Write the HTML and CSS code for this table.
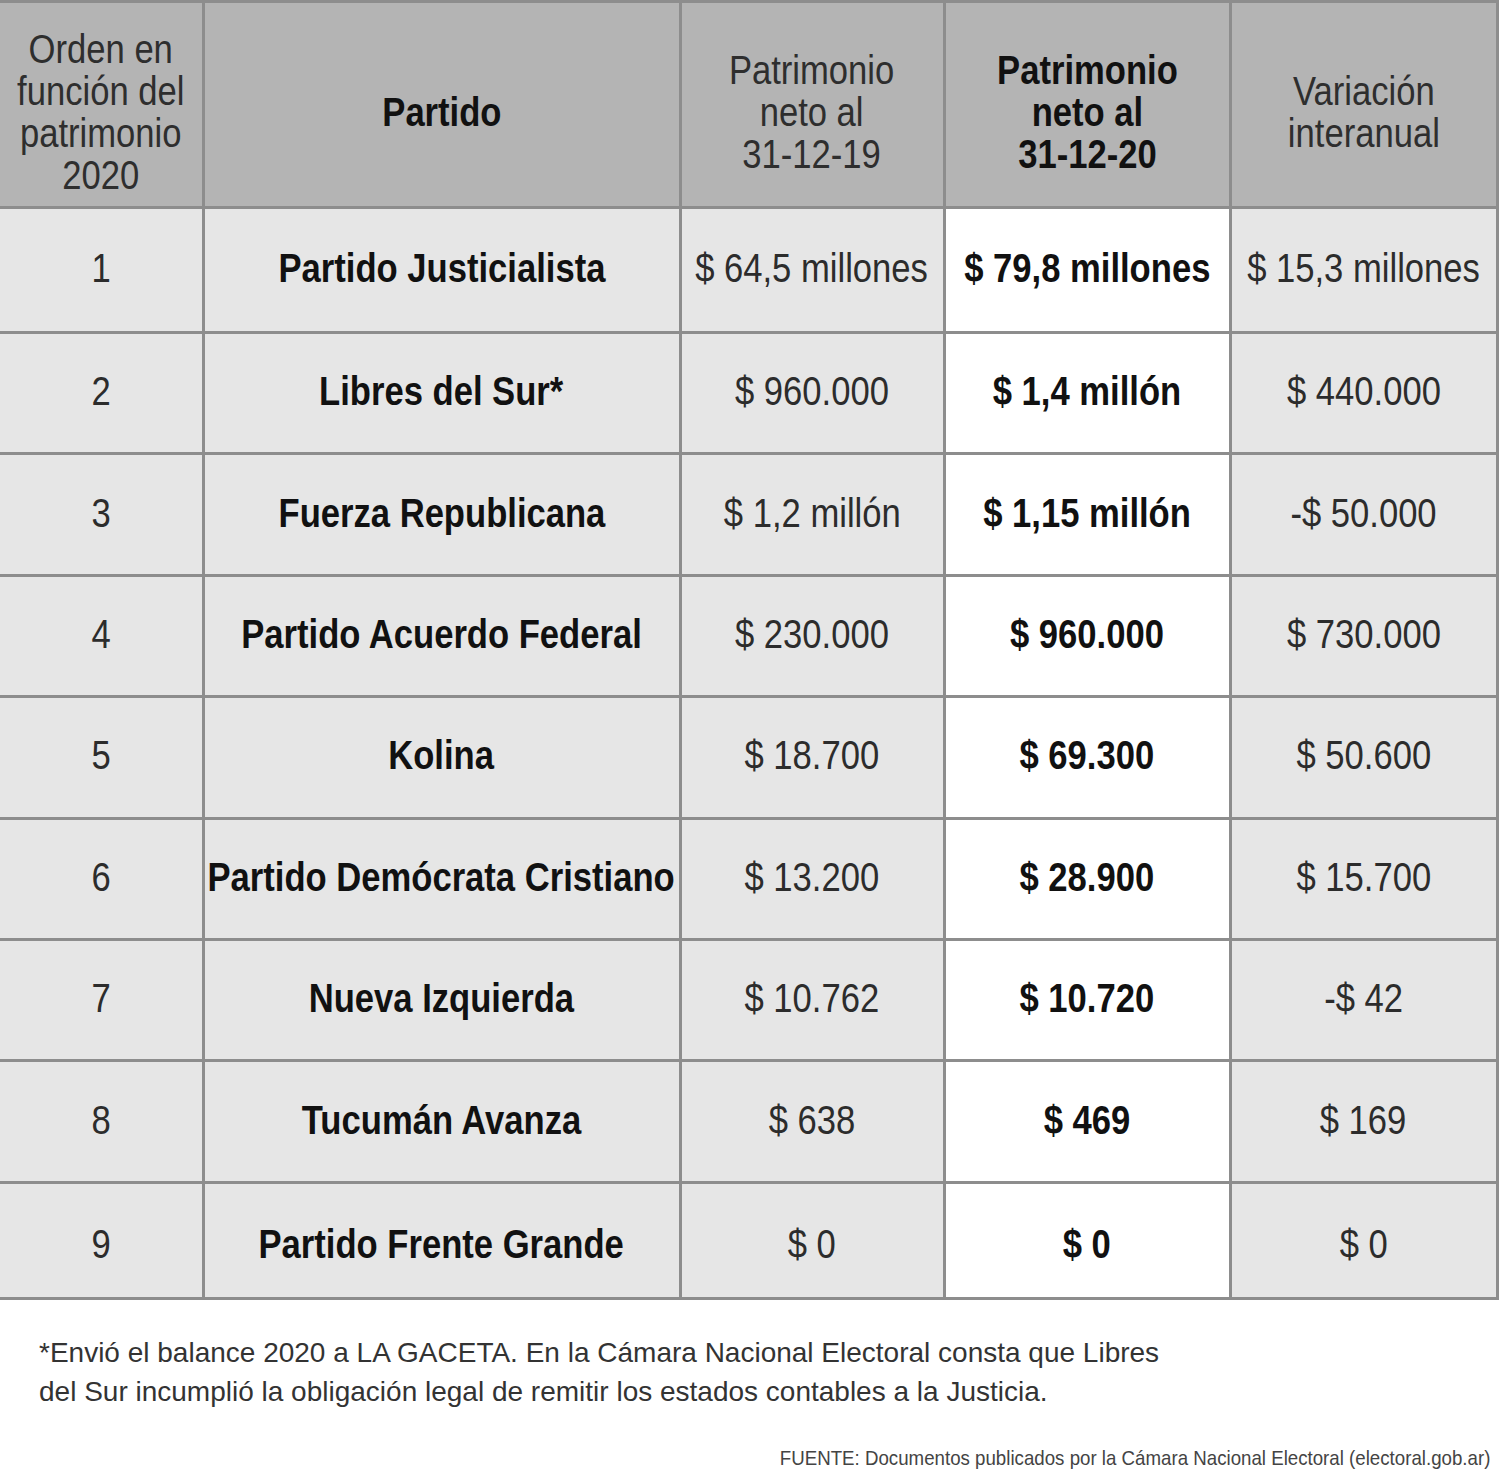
FILE: index.html
```html
<!DOCTYPE html>
<html lang="es">
<head>
<meta charset="utf-8">
<title>Patrimonio de partidos</title>
<link rel="stylesheet" href="styles.css">
</head>
<body>
<div class="page">
  <table class="tbl">
    <colgroup>
      <col class="c1"><col class="c2"><col class="c3"><col class="c4"><col class="c5">
    </colgroup>
    <thead>
      <tr>
        <th class="reg"><div class="cc"><span class="sq">Orden en<br>función del<br>patrimonio<br>2020</span></div></th>
        <th class="bold"><div class="cc"><span class="sq">Partido</span></div></th>
        <th class="reg"><div class="cc"><span class="sq">Patrimonio<br>neto al<br>31-12-19</span></div></th>
        <th class="bold"><div class="cc"><span class="sq">Patrimonio<br>neto al<br>31-12-20</span></div></th>
        <th class="reg"><div class="cc"><span class="sq">Variación<br>interanual</span></div></th>
      </tr>
    </thead>
    <tbody>
      <tr class="r1"><td class="reg"><div class="cc"><span class="sq">1</span></div></td><td class="bold"><div class="cc"><span class="sq">Partido Justicialista</span></div></td><td class="reg"><div class="cc"><span class="sq">$ 64,5 millones</span></div></td><td class="bold hl"><div class="cc"><span class="sq">$ 79,8 millones</span></div></td><td class="reg"><div class="cc"><span class="sq">$ 15,3 millones</span></div></td></tr>
      <tr><td class="reg"><div class="cc"><span class="sq">2</span></div></td><td class="bold"><div class="cc"><span class="sq">Libres del Sur*</span></div></td><td class="reg"><div class="cc"><span class="sq">$ 960.000</span></div></td><td class="bold hl"><div class="cc"><span class="sq">$ 1,4 millón</span></div></td><td class="reg"><div class="cc"><span class="sq">$ 440.000</span></div></td></tr>
      <tr><td class="reg"><div class="cc"><span class="sq">3</span></div></td><td class="bold"><div class="cc"><span class="sq">Fuerza Republicana</span></div></td><td class="reg"><div class="cc"><span class="sq">$ 1,2 millón</span></div></td><td class="bold hl"><div class="cc"><span class="sq">$ 1,15 millón</span></div></td><td class="reg"><div class="cc"><span class="sq">-$ 50.000</span></div></td></tr>
      <tr><td class="reg"><div class="cc"><span class="sq">4</span></div></td><td class="bold"><div class="cc"><span class="sq">Partido Acuerdo Federal</span></div></td><td class="reg"><div class="cc"><span class="sq">$ 230.000</span></div></td><td class="bold hl"><div class="cc"><span class="sq">$ 960.000</span></div></td><td class="reg"><div class="cc"><span class="sq">$ 730.000</span></div></td></tr>
      <tr><td class="reg"><div class="cc"><span class="sq">5</span></div></td><td class="bold"><div class="cc"><span class="sq">Kolina</span></div></td><td class="reg"><div class="cc"><span class="sq">$ 18.700</span></div></td><td class="bold hl"><div class="cc"><span class="sq">$ 69.300</span></div></td><td class="reg"><div class="cc"><span class="sq">$ 50.600</span></div></td></tr>
      <tr><td class="reg"><div class="cc"><span class="sq">6</span></div></td><td class="bold"><div class="cc"><span class="sq">Partido Demócrata Cristiano</span></div></td><td class="reg"><div class="cc"><span class="sq">$ 13.200</span></div></td><td class="bold hl"><div class="cc"><span class="sq">$ 28.900</span></div></td><td class="reg"><div class="cc"><span class="sq">$ 15.700</span></div></td></tr>
      <tr><td class="reg"><div class="cc"><span class="sq">7</span></div></td><td class="bold"><div class="cc"><span class="sq">Nueva Izquierda</span></div></td><td class="reg"><div class="cc"><span class="sq">$ 10.762</span></div></td><td class="bold hl"><div class="cc"><span class="sq">$ 10.720</span></div></td><td class="reg"><div class="cc"><span class="sq">-$ 42</span></div></td></tr>
      <tr><td class="reg"><div class="cc"><span class="sq">8</span></div></td><td class="bold"><div class="cc"><span class="sq">Tucumán Avanza</span></div></td><td class="reg"><div class="cc"><span class="sq">$ 638</span></div></td><td class="bold hl"><div class="cc"><span class="sq">$ 469</span></div></td><td class="reg"><div class="cc"><span class="sq">$ 169</span></div></td></tr>
      <tr class="r9"><td class="reg"><div class="cc"><span class="sq">9</span></div></td><td class="bold"><div class="cc"><span class="sq">Partido Frente Grande</span></div></td><td class="reg"><div class="cc"><span class="sq">$ 0</span></div></td><td class="bold hl"><div class="cc"><span class="sq">$ 0</span></div></td><td class="reg"><div class="cc"><span class="sq">$ 0</span></div></td></tr>
    </tbody>
  </table>
  <p class="note"><span class="note-text">*Envió el balance 2020 a LA GACETA. En la Cámara Nacional Electoral consta que Libres<br>del Sur incumplió la obligación legal de remitir los estados contables a la Justicia.</span></p>
  <p class="source"><span class="source-text">FUENTE: Documentos publicados por la Cámara Nacional Electoral (electoral.gob.ar)</span></p>
</div>
</body>
</html>
```

FILE: styles.css
```css
html, body {
  margin: 0;
  padding: 0;
  background: #ffffff;
}

body {
  font-family: "Liberation Sans", Arial, sans-serif;
  color: #222;
  width: 1500px;
  overflow: hidden;
}

.page {
  width: 1500px;
}

.tbl {
  border-collapse: collapse;
  table-layout: fixed;
  width: 1497px;
  border-top: 3px solid #8a8a8a;
}

.c1 { width: 203px; }
.c2 { width: 477px; }
.c3 { width: 264px; }
.c4 { width: 286px; }
.c5 { width: 267px; }

.tbl th,
.tbl td {
  border: 3px solid #8d8d8d;
  text-align: center;
  vertical-align: middle;
  padding: 0;
  font-size: 40px;
  line-height: 42px;
  white-space: nowrap;
}

.tbl th:first-child,
.tbl td:first-child {
  border-left: none;
}

.tbl thead tr {
  height: 206px;
}

.tbl th {
  background: #b4b4b4;
  color: #2e2e2e;
  padding-top: 14px;
}

.tbl tbody tr {
  height: 121.4px;
}

.tbl tbody tr.r1 {
  height: 125px;
}

.tbl tbody tr.r9 {
  height: 116px;
}

.tbl td {
  background: #e6e6e6;
  color: #2c2c2c;
  padding-bottom: 4px;
}

.tbl tr.r9 td {
  padding-bottom: 0;
  padding-top: 8px;
}

.tbl td.hl {
  background: #ffffff;
}

.reg { font-weight: normal; }
.tbl .bold { font-weight: bold; color: #111; }

.cc {
  display: flex;
  justify-content: center;
  align-items: center;
}

.sq {
  display: inline-block;
  flex: none;
  transform: scaleX(0.865);
  transform-origin: 50% 50%;
}

.note {
  margin: 33px 0 0 39px;
  font-size: 28px;
  line-height: 39px;
  color: #333;
}

.note-text {
  display: inline-block;
  white-space: nowrap;
}

.source {
  margin: 35px 10px 0 0;
  text-align: right;
  font-size: 21px;
  line-height: 24px;
  color: #444;
}

.source-text {
  display: inline-block;
  white-space: nowrap;
  transform: scaleX(0.89);
  transform-origin: 100% 50%;
}
```
